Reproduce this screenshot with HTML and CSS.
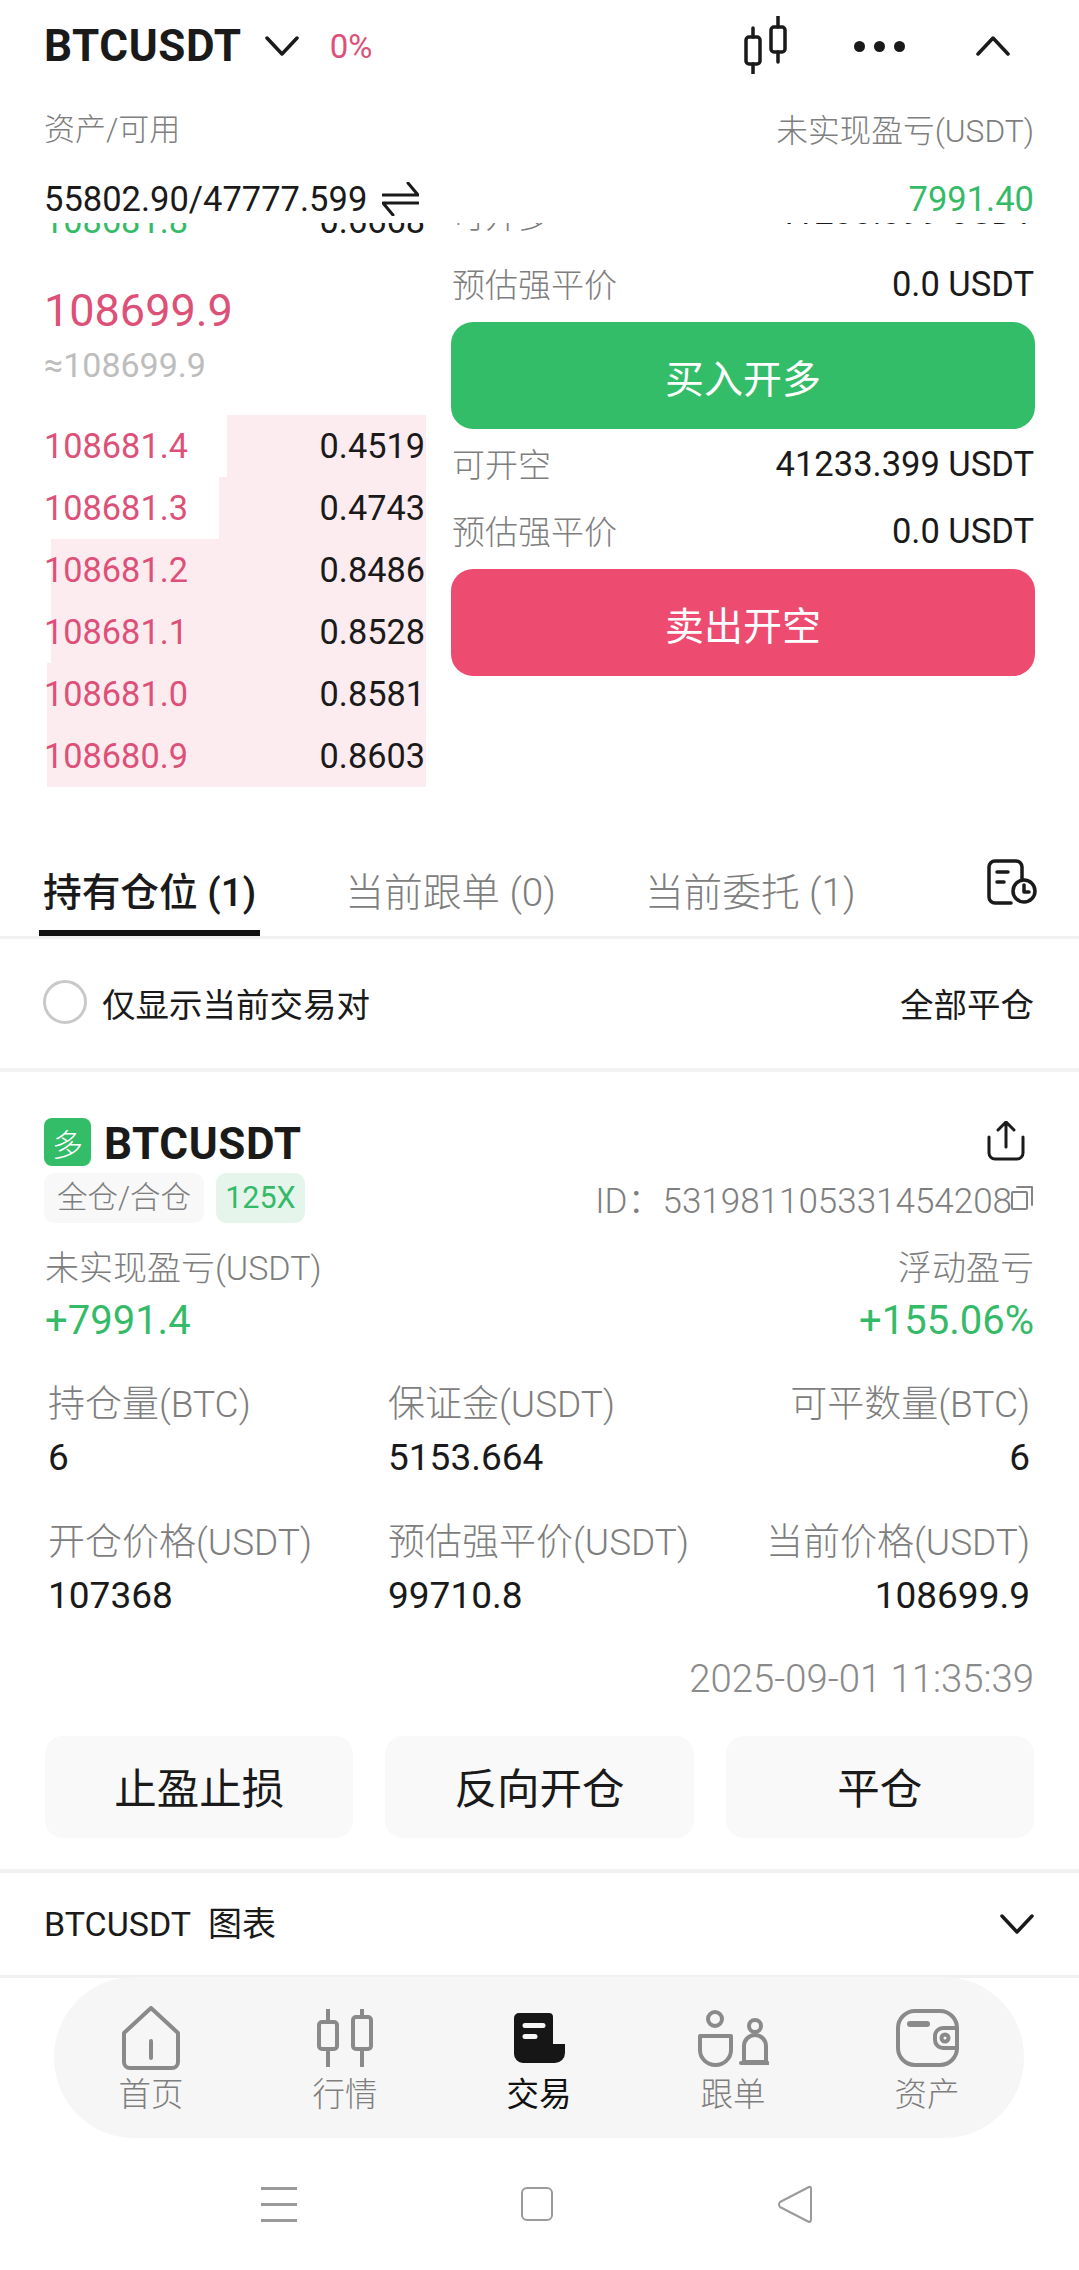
FILE: index.html
```html
<!DOCTYPE html>
<html lang="zh">
<head>
<meta charset="utf-8">
<title>BTCUSDT</title>
<link rel="stylesheet" href="styles.css">
</head>
<body>
<div class="app">
  <header class="head">
    <div class="head-top">
      <span class="sym">BTCUSDT</span>
      <svg class="chev" width="34" height="20" viewBox="0 0 34 20"><path d="M2 2 17 18 32 2"/></svg>
      <span class="pct">0%</span>
      <svg class="ic-candle" width="46" height="58" viewBox="0 0 46 58"><path d="M10 12V21M10 48V58M35 0V11M35 36V46"/><rect x="3" y="21" width="14" height="27" rx="3"/><rect x="28" y="11" width="14" height="25" rx="3"/></svg>
      <div class="dots"><i></i><i></i><i></i></div>
      <svg class="chev" width="34" height="20" viewBox="0 0 34 20"><path d="M2 18 17 2 32 18"/></svg>
    </div>
    <div class="head-labels">
      <span class="lbl">资产/可用</span>
      <span class="lbl lbl-low">未实现盈亏(USDT)</span>
    </div>
    <div class="head-vals">
      <span class="bal">55802.90/47777.599</span>
      <svg class="swap" width="37" height="34" viewBox="0 0 37 34"><path d="M1 13H36L26 1M36 21H1L11 33"/></svg>
      <span class="bal green push">7991.40</span>
    </div>
  </header>

  <section class="trade">
    <div class="book">
      <div class="lvl"><span class="green">108681.8</span><span>0.6668</span></div>
      <div class="last">108699.9</div>
      <div class="approx">≈108699.9</div>
      <div class="asks">
        <div class="lvl"><i class="bar" style="width:199px"></i><span class="red">108681.4</span><span>0.4519</span></div>
        <div class="lvl"><i class="bar" style="width:207px"></i><span class="red">108681.3</span><span>0.4743</span></div>
        <div class="lvl"><i class="bar" style="width:375px"></i><span class="red">108681.2</span><span>0.8486</span></div>
        <div class="lvl"><i class="bar" style="width:375px"></i><span class="red">108681.1</span><span>0.8528</span></div>
        <div class="lvl"><i class="bar" style="width:379px"></i><span class="red">108681.0</span><span>0.8581</span></div>
        <div class="lvl"><i class="bar" style="width:379px"></i><span class="red">108680.9</span><span>0.8603</span></div>
      </div>
    </div>
    <div class="form">
      <div class="frow frow-first"><span>可开多</span><b>41233.399 USDT</b></div>
      <div class="frow"><span>预估强平价</span><b>0.0 USDT</b></div>
      <div class="cta cta-buy">买入开多</div>
      <div class="frow frow-gap"><span>可开空</span><b>41233.399 USDT</b></div>
      <div class="frow"><span>预估强平价</span><b>0.0 USDT</b></div>
      <div class="cta cta-sell">卖出开空</div>
    </div>
  </section>

  <nav class="tabs">
    <div class="tab on">持有仓位 (1)</div>
    <div class="tab">当前跟单 (0)</div>
    <div class="tab">当前委托 (1)</div>
    <svg class="ic-hist" width="50" height="46" viewBox="0 0 50 46"><path d="M24 44H8a6 6 0 0 1-6-6V8a6 6 0 0 1 6-6H29a6 6 0 0 1 6 6V20M10 13H21M10 23H17"/><circle cx="37" cy="32" r="11"/><path d="M37 26V33H42"/></svg>
  </nav>

  <div class="filter">
    <i class="radio"></i>
    <span class="filter-txt">仅显示当前交易对</span>
    <span class="filter-all">全部平仓</span>
  </div>

  <article class="card">
    <div class="card-top">
      <span class="side">多</span>
      <span class="sym sym-card">BTCUSDT</span>
      <svg class="ic-share" width="38" height="40" viewBox="0 0 38 40"><path d="M19 26V2M11 9 19 1 27 9M2 16V32a6 6 0 0 0 6 6H30a6 6 0 0 0 6-6V16"/></svg>
    </div>
    <div class="card-sub">
      <span class="chip">全仓/合仓</span>
      <span class="chip chip-lev">125X</span>
      <span class="oid">ID：531981105331454208</span>
      <svg class="ic-copy" width="23" height="25" viewBox="0 0 23 25"><path d="M6 1H21V19"/><rect x="1" y="6" width="15" height="17" rx="1"/></svg>
    </div>
    <div class="pnl">
      <div><div class="pnl-l">未实现盈亏(USDT)</div><div class="pnl-v green">+7991.4</div></div>
      <div class="end"><div class="pnl-l">浮动盈亏</div><div class="pnl-v green">+155.06%</div></div>
    </div>
    <div class="stats">
      <div><div class="st-l">持仓量(BTC)</div><div class="st-v">6</div></div>
      <div><div class="st-l">保证金(USDT)</div><div class="st-v">5153.664</div></div>
      <div class="end"><div class="st-l">可平数量(BTC)</div><div class="st-v">6</div></div>
      <div><div class="st-l">开仓价格(USDT)</div><div class="st-v">107368</div></div>
      <div><div class="st-l">预估强平价(USDT)</div><div class="st-v">99710.8</div></div>
      <div class="end"><div class="st-l">当前价格(USDT)</div><div class="st-v">108699.9</div></div>
    </div>
    <div class="date">2025-09-01 11:35:39</div>
    <div class="acts">
      <div class="act">止盈止损</div>
      <div class="act">反向开仓</div>
      <div class="act">平仓</div>
    </div>
  </article>

  <div class="chart">
    <span>BTCUSDT&nbsp; 图表</span>
    <svg class="chev" width="34" height="20" viewBox="0 0 34 20"><path d="M2 2 17 18 32 2"/></svg>
  </div>

  <footer class="nav">
    <div class="item">
      <div class="ic-box"><svg width="60" height="64" viewBox="0 0 60 64"><path d="M30 2 57 27V56a6 6 0 0 1-6 6H9a6 6 0 0 1-6-6V27ZM30 35V52"/></svg></div>
      <span>首页</span>
    </div>
    <div class="item">
      <div class="ic-box"><svg width="58" height="58" viewBox="0 0 58 58"><path d="M12 0V13M12 40V58M46 0V8M46 40V58"/><rect x="3" y="13" width="18" height="27" rx="3"/><rect x="37" y="8" width="18" height="32" rx="3"/></svg></div>
      <span>行情</span>
    </div>
    <div class="item item-on">
      <div class="ic-box"><svg class="solid" width="51" height="50" viewBox="0 0 51 50"><path fill-rule="evenodd" d="M5 0H35a4 4 0 0 1 4 4V31H51V40a10 10 0 0 1-10 10H9a9 9 0 0 1-9-9V5a5 5 0 0 1 5-5ZM11 10a2 2 0 0 0 0 5H29a2 2 0 0 0 0-5ZM11 21a2 2 0 0 0 0 5H21a2 2 0 0 0 0-5Z"/></svg></div>
      <span>交易</span>
    </div>
    <div class="item">
      <div class="ic-box"><svg width="72" height="58" viewBox="0 0 72 58"><circle cx="18" cy="10" r="7"/><path d="M3 27H34V41a15.500 15 0 0 1-31 0Z"/><circle cx="58" cy="17" r="6"/><path d="M47 53V37a11 11 0 0 1 22 0V53ZM44 54H71"/></svg></div>
      <span>跟单</span>
    </div>
    <div class="item">
      <div class="ic-box"><svg width="63" height="58" viewBox="0 0 63 58"><rect x="2" y="2" width="59" height="54" rx="17"/><path class="thick" d="M14 15H31"/><path d="M61 19H47a8 8 0 0 0-8 8V31a8 8 0 0 0 8 8H61"/><circle cx="49" cy="29" r="3.500"/></svg></div>
      <span>资产</span>
    </div>
  </footer>

  <div class="sys">
    <div class="sys-menu"><i></i><i></i><i></i></div>
    <i class="sys-home"></i>
    <svg class="sys-back" width="35" height="39" viewBox="0 0 35 39"><path d="M32 2 3 17Q1 19.500 3 22L32 37Q34 37 34 34V4Q34 1 32 2Z"/></svg>
  </div>
</div>
</body>
</html>
```
FILE: styles.css
```css
* { box-sizing: border-box; }
html, body { margin: 0; padding: 0; background: #fff; }
body {
  font-family: Roboto, "Noto Sans CJK SC", sans-serif;
  color: #1a1a1a;
}
i { display: block; }
svg { display: block; flex: none; fill: none; stroke: #1a1a1a; stroke-width: 3.5; stroke-linecap: round; stroke-linejoin: round; }
.app { width: 1079px; height: 2270px; overflow: hidden; display: flex; flex-direction: column; }
.green { color: #35bb68; }
.red { color: #dd5178; }
.end { text-align: right; }

/* header */
.head { height: 223px; flex: none; padding: 0 45px 0 44px; background: #fff; position: relative; z-index: 1; }
.head-top { height: 92px; display: flex; align-items: center; padding-right: 24px; }
.sym { font-size: 44px; font-weight: 700; line-height: 50px; letter-spacing: 0.6px; }
.chev { stroke-width: 3.5; }
.head-top .chev:first-of-type { margin-left: 23px; }
.pct { font-size: 33px; color: #dd5178; margin-left: 31px; }
.ic-candle { margin-left: auto; margin-top: -2px; }
.dots { display: flex; gap: 9px; margin-left: 65px; margin-right: 71px; }
.dots i { width: 11px; height: 11px; border-radius: 50%; background: #1a1a1a; }
.head-labels { display: flex; justify-content: space-between; height: 40px; margin-top: 18px; }
.lbl { font-size: 31px; line-height: 40px; color: #7e7e7e; font-weight: 300; }
.lbl-low { position: relative; top: 2px; font-size: 31.700px; }
.head-vals { display: flex; align-items: center; height: 44px; margin-top: 27px; }
.bal { font-size: 34.500px; line-height: 44px; }
.swap { margin-left: 15px; stroke-width: 3; }
.push { margin-left: auto; }

/* order book + form */
.trade { height: 617px; flex: none; overflow: hidden; display: flex; gap: 25px; }
.book { width: 426px; flex: none; margin-top: -33px; }
.lvl { position: relative; height: 62px; display: flex; align-items: center; justify-content: space-between; padding: 0 1px 0 44px; font-size: 34.300px; }
.lvl span { position: relative; }
.bar { position: absolute; right: 0; top: 0; bottom: 0; background: #fdecef; }
.last { font-size: 45px; line-height: 60px; color: #dd5178; padding-left: 44px; margin-top: 29px; }
.approx { font-size: 34px; line-height: 44px; color: #bdbdbd; padding-left: 44px; margin-top: 2px; }
.asks { margin-top: 28px; }
.form { width: 584px; flex: none; margin-top: -40px; }
.frow { height: 67px; display: flex; align-items: center; justify-content: space-between; font-size: 33px; color: #7e7e7e; padding: 0 1px; font-weight: 300; }
.frow span { margin-bottom: 2px; }
.frow b { font-weight: 400; color: #1a1a1a; font-size: 34.500px; }
.frow-first b { margin-bottom: 10px; }
.frow-first span { margin-bottom: 6px; }
.frow-gap { margin-top: 1px; }
.cta { height: 107px; margin-top: 5px; border-radius: 22px; color: #fff; font-size: 39px; display: flex; align-items: center; justify-content: center; }
.cta-buy { background: #34bd68; }
.cta-sell { background: #ed4c70; }

/* tabs */
.tabs { height: 99px; flex: none; display: flex; gap: 81px; padding-left: 39px; padding-right: 42px; border-bottom: 3px solid #f1f1f1; }
.tab { height: 96px; padding: 30px 4px 0; font-size: 38.700px; line-height: 46px; color: #7e7e7e; font-weight: 300; white-space: nowrap; }
.tab.on { color: #1a1a1a; font-weight: 500; border-bottom: 6px solid #111; }
.ic-hist { margin-left: auto; margin-top: 19px; }

/* filter */
.filter { height: 133px; flex: none; display: flex; align-items: center; padding: 0 45px 3px 43px; border-bottom: 4px solid #f2f2f2; font-size: 33.500px; }
.radio { width: 44px; height: 44px; border-radius: 50%; border: 3px solid #c9c9c9; }
.filter-txt { margin-left: 15px; }
.filter-all { margin-left: auto; }

/* position card */
.card { height: 801px; flex: none; padding: 46px 45px 0 44px; border-bottom: 4px solid #f2f2f2; }
.card-top { display: flex; align-items: center; height: 48px; }
.side { width: 47px; height: 48px; border-radius: 8px; background: #34bd68; color: #fff; font-size: 31px; font-weight: 300; display: flex; align-items: center; justify-content: center; }
.sym-card { margin-left: 13px; margin-top: 3px; }
.ic-share { margin-left: auto; margin-right: 9px; margin-top: -3px; stroke-width: 3; }
.card-sub { display: flex; align-items: center; height: 50px; margin-top: 7px; }
.chip { height: 50px; padding: 0 13px; border-radius: 10px; background: #f8f8f8; color: #7e7e7e; font-size: 30.500px; line-height: 50px; font-weight: 300; }
.chip-lev { margin-left: 12px; background: #e6f5ec; color: #35bb68; padding: 0 9px; font-weight: 400; }
.oid { margin-left: auto; color: #7e7e7e; font-size: 35px; font-weight: 300; margin-bottom: 2px; }
.ic-copy { margin-left: -1px; stroke: #848484; stroke-width: 2; }
.pnl { display: flex; justify-content: space-between; margin-top: 23px; margin-left: 1px; }
.pnl-l { font-size: 34px; line-height: 44px; color: #7e7e7e; font-weight: 300; }
.pnl-v { font-size: 40px; line-height: 50px; margin-top: 6px; }
.stats { display: grid; grid-template-columns: 340px 1fr auto; row-gap: 40px; margin-top: 36px; padding: 0 4px; }
.st-l { font-size: 37px; line-height: 46px; color: #7e7e7e; font-weight: 300; white-space: nowrap; }
.st-v { font-size: 37px; line-height: 44px; margin-top: 8px; }
.date { margin-top: 39px; text-align: right; font-size: 38.300px; line-height: 44px; color: #8a8a8a; font-weight: 300; }
.acts { display: grid; grid-template-columns: repeat(3, 1fr); gap: 32px; margin-top: 35px; margin-left: 1px; }
.act { height: 102px; padding-bottom: 3px; border-radius: 18px; background: #f9f9f9; font-size: 42.500px; display: flex; align-items: center; justify-content: center; }

/* chart row */
.chart { height: 105px; flex: none; display: flex; align-items: center; justify-content: space-between; padding: 0 45px 5px 44px; border-bottom: 3px solid #f1f1f1; font-size: 34px; }
.chart .chev { margin-top: 4px; }

/* tab bar */
.nav { height: 161px; flex: none; margin: -1px 55px 0 54px; padding-top: 28px; border-radius: 80px; background: #f6f6f6; display: flex; }
.item { flex: 1; display: flex; flex-direction: column; align-items: center; color: #7e7e7e; font-size: 32.500px; font-weight: 300; }
.item span { line-height: 44px; margin-top: 2px; }
.item-on { color: #111; font-weight: 400; }
.ic-box { height: 66px; display: flex; align-items: center; justify-content: center; }
.ic-box svg { stroke: #8a8a8a; stroke-width: 4; }
.ic-box svg.solid { fill: #161616; stroke: none; }
.ic-box .thick { stroke-width: 6; }

/* system bar */
.sys { flex: 1; display: flex; align-items: center; padding-left: 261px; gap: 224px; }
.sys-menu { width: 36px; display: flex; flex-direction: column; gap: 13px; }
.sys-menu i { height: 3px; background: #9a9a9a; }
.sys-home { width: 32px; height: 34px; border: 2px solid #9a9a9a; border-radius: 6px; }
.sys-back { stroke: #9a9a9a; stroke-width: 2; }
```
